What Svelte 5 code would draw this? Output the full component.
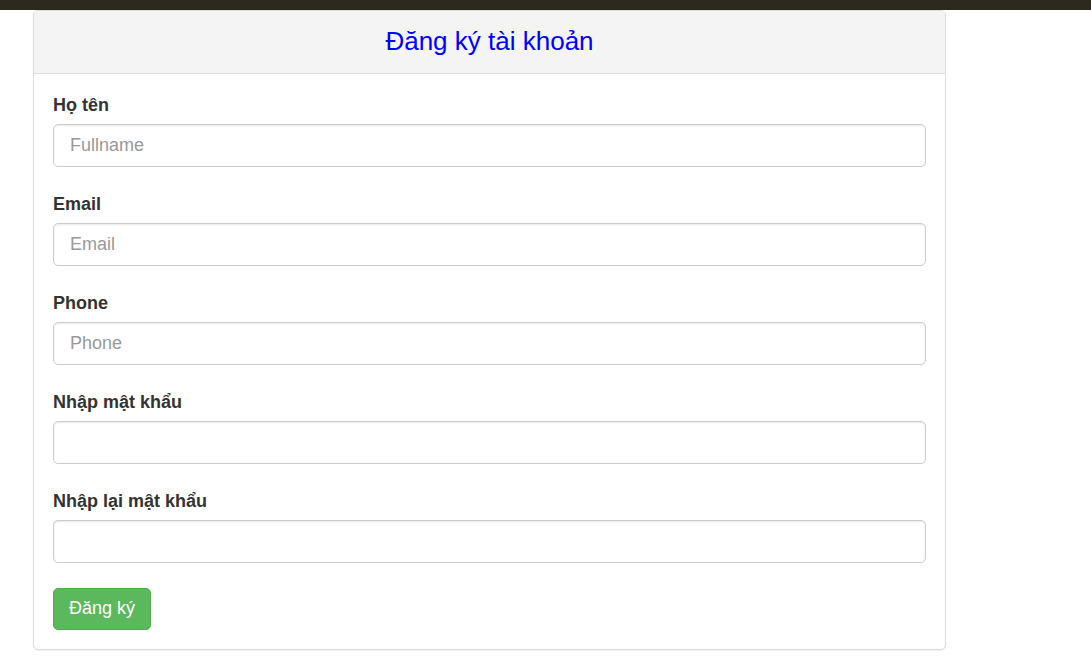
<script>
  const fields = [
    { id: 'fullname', label: 'Họ tên', type: 'text', placeholder: 'Fullname' },
    { id: 'email', label: 'Email', type: 'email', placeholder: 'Email' },
    { id: 'phone', label: 'Phone', type: 'tel', placeholder: 'Phone' },
    { id: 'password', label: 'Nhập mật khẩu', type: 'password', placeholder: '' },
    { id: 'confirm', label: 'Nhập lại mật khẩu', type: 'password', placeholder: '' }
  ];
</script>

<header class="topbar"></header>
<main class="container">
  <section class="panel">
    <h1 class="heading">Đăng ký tài khoản</h1>
    <form class="body" onsubmit={(e) => e.preventDefault()}>
      {#each fields as f (f.id)}
        <div class="group">
          <label for={f.id}>{f.label}</label>
          <input id={f.id} type={f.type} placeholder={f.placeholder} />
        </div>
      {/each}
      <button type="submit">Đăng ký</button>
    </form>
  </section>
</main>

<style>
  :global(body) {
    background: #fff;
    color: #333;
    font: 18px/25px "Liberation Sans", Arial, sans-serif;
  }
  .topbar {
    height: 10px;
    background: #2d291e;
  }
  .container {
    padding: 0 145px 16px 33px;
  }
  .panel {
    border: 1px solid #ddd;
    border-radius: 5px;
    box-shadow: 0 1px 1px rgba(0, 0, 0, 0.05);
    background: #fff;
  }
  .heading {
    margin: 0;
    padding: 14px 19px 16px;
    border-bottom: 1px solid #ddd;
    border-radius: 4px 4px 0 0;
    background: #f4f4f4;
    color: #00f;
    font-size: 26px;
    font-weight: 400;
    line-height: 32px;
    text-align: center;
  }
  .body {
    padding: 19px;
  }
  .group {
    margin-bottom: 25px;
  }
  label {
    display: block;
    margin-bottom: 6px;
    font-weight: 700;
  }
  input {
    display: block;
    box-sizing: border-box;
    width: 100%;
    height: 43px;
    padding: 7px 16px 8px;
    border: 1px solid #ccc;
    border-radius: 5px;
    box-shadow: inset 0 1px 2px rgba(0, 0, 0, 0.09);
    background: #fff;
    color: #555;
    font: inherit;
  }
  input::placeholder {
    color: #999;
    opacity: 1;
  }
  button {
    display: block;
    padding: 7px 15px 8px;
    border: 1px solid #4cae4c;
    border-radius: 5px;
    background: #5cb85c;
    color: #fff;
    font: inherit;
  }
</style>
